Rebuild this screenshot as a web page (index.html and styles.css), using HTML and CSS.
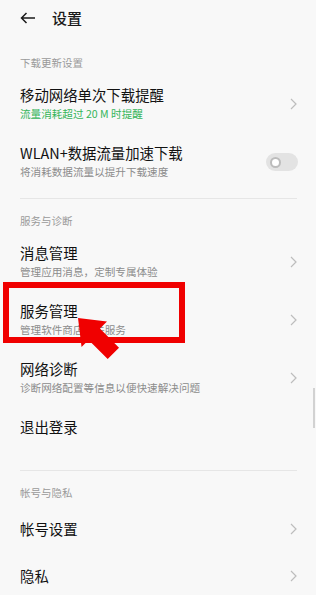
FILE: index.html
```html
<html>
	<head>
		<meta charset="utf-8">
		<link rel="stylesheet" href="styles.css">
	</head>
	<body>
		<div class="page">
			<div class="appbar">
				<svg class="back" width="16" height="12" viewBox="0 0 16 12">
					<path d="M15 6H1.5M6.5 1L1.5 6l5 5" fill="none" stroke="#1a1a1a" stroke-width="1.5"/>
				</svg>
				<span class="title">设置</span>
			</div>

			<div class="section-title">下载更新设置</div>
			<div class="item">
				<div class="text">
					<div class="main">移动网络单次下载提醒</div>
					<div class="sub green">流量消耗超过 20 M 时提醒</div>
				</div>
				<svg class="chev" width="7" height="12" viewBox="0 0 7 12"><path d="M1 1l5 5-5 5" fill="none" stroke="#bdbdbd" stroke-width="1.2"/></svg>
			</div>
			<div class="item">
				<div class="text">
					<div class="main">WLAN+数据流量加速下载</div>
					<div class="sub">将消耗数据流量以提升下载速度</div>
				</div>
				<div class="toggle"><span class="knob"></span></div>
			</div>
			<div class="divider"></div>

			<div class="section-title">服务与诊断</div>
			<div class="item">
				<div class="text">
					<div class="main">消息管理</div>
					<div class="sub">管理应用消息，定制专属体验</div>
				</div>
				<svg class="chev" width="7" height="12" viewBox="0 0 7 12"><path d="M1 1l5 5-5 5" fill="none" stroke="#bdbdbd" stroke-width="1.2"/></svg>
			</div>
			<div class="item">
				<div class="text">
					<div class="main">服务管理</div>
					<div class="sub">管理软件商店相关服务</div>
				</div>
				<svg class="chev" width="7" height="12" viewBox="0 0 7 12"><path d="M1 1l5 5-5 5" fill="none" stroke="#bdbdbd" stroke-width="1.2"/></svg>
			</div>
			<div class="item">
				<div class="text">
					<div class="main">网络诊断</div>
					<div class="sub">诊断网络配置等信息以便快速解决问题</div>
				</div>
				<svg class="chev" width="7" height="12" viewBox="0 0 7 12"><path d="M1 1l5 5-5 5" fill="none" stroke="#bdbdbd" stroke-width="1.2"/></svg>
			</div>
			<div class="item logout">
				<div class="main">退出登录</div>
			</div>
			<div class="divider"></div>

			<div class="section-title">帐号与隐私</div>
			<div class="item single">
				<div class="main">帐号设置</div>
				<svg class="chev" width="7" height="12" viewBox="0 0 7 12"><path d="M1 1l5 5-5 5" fill="none" stroke="#bdbdbd" stroke-width="1.2"/></svg>
			</div>
			<div class="item single">
				<div class="main">隐私</div>
				<svg class="chev" width="7" height="12" viewBox="0 0 7 12"><path d="M1 1l5 5-5 5" fill="none" stroke="#bdbdbd" stroke-width="1.2"/></svg>
			</div>

			<div class="scrollbar"></div>
			<div class="highlight"></div>
			<svg class="pointer" width="316" height="595" viewBox="0 0 316 595">
				<polygon transform="translate(78 318) rotate(45)" points="0,0 23,-18 23,-8 50,-8 50,8 23,8 23,18" fill="#f00000"/>
			</svg>
		</div>
	</body>
</html>
```

FILE: styles.css
```css
body {
	margin: 0;
	background: #f8f8f8;
	font-family: "Noto Sans CJK SC", "Noto Sans", sans-serif;
	color: #1a1a1a;
}

.page {
	position: relative;
	width: 316px;
	height: 595px;
	overflow: hidden;
}

.appbar {
	height: 36px;
	margin-bottom: 5px;
	display: flex;
	align-items: center;
	padding: 0 20px;
}

.back {
	margin-right: 16px;
}

.title {
	font-size: 15px;
	font-weight: 500;
	line-height: 20px;
}

.section-title {
	padding: 14px 20px 4px;
	font-size: 10.5px;
	line-height: 16px;
	color: #9a9a9a;
}

.item {
	display: flex;
	align-items: center;
	justify-content: space-between;
	padding: 10px 19px 10px 20px;
}

.item .text {
	display: flex;
	flex-direction: column;
}

.main {
	font-size: 14.4px;
	line-height: 20px;
	color: #111;
}

.sub {
	font-size: 10.6px;
	line-height: 18px;
	color: #8c8c8c;
}

.sub.green {
	color: #35b55a;
}

.item.logout {
	padding-top: 10px;
	padding-bottom: 26px;
}

.item.single {
	padding-top: 14px;
	padding-bottom: 13px;
}

.chev {
	flex: none;
}

.toggle {
	width: 32px;
	height: 18px;
	border-radius: 9px;
	background: #e3e3e3;
	display: flex;
	align-items: center;
	padding-left: 4px;
	box-sizing: border-box;
	margin-right: -1px;
}

.knob {
	width: 7px;
	height: 7px;
	border-radius: 50%;
	border: 2px solid #bcbcbc;
	background: #fff;
}

.divider {
	height: 1px;
	margin: 7px 19px 0 20px;
	background: #e6e6e6;
}

.scrollbar {
	position: absolute;
	right: 1px;
	top: 388px;
	width: 2px;
	height: 40px;
	background: #d2d2d2;
}

.highlight {
	position: absolute;
	left: 3px;
	top: 282px;
	width: 182px;
	height: 61px;
	box-sizing: border-box;
	border: 6px solid #f00000;
}

.pointer {
	position: absolute;
	left: 0;
	top: 0;
}
```
